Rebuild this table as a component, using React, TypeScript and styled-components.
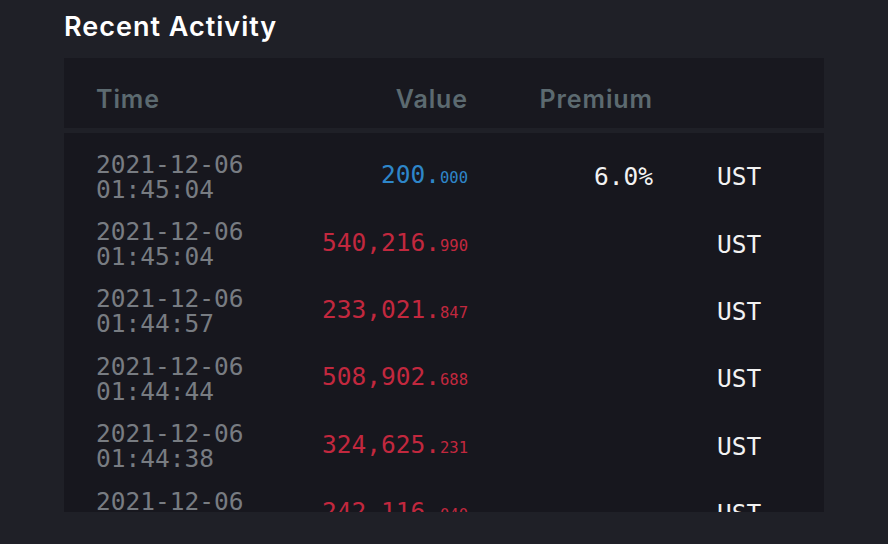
import React from 'react'
import styled, { createGlobalStyle } from 'styled-components'

const GlobalStyle = createGlobalStyle`
    html, body {
        margin: 0;
        padding: 0;
        background: #1f2027;
    }
    body {
        font-family: Inter, "Noto Sans", sans-serif;
    }
`

const Page = styled.div`
    width: 888px;
    height: 544px;
    padding: 0 64px;
    box-sizing: border-box;
    overflow: hidden;
`

const Title = styled.h2`
    margin: 0;
    padding-top: 13px;
    height: 58px;
    box-sizing: border-box;
    font-size: 27px;
    line-height: 27px;
    font-weight: 600;
    letter-spacing: 1px;
    color: #ffffff;
`

const Table = styled.div`
    display: flex;
    flex-direction: column;
    gap: 5px;
`

const cols = '212px 160px 185px 1fr'

const Head = styled.div`
    display: grid;
    grid-template-columns: ${cols};
    align-items: start;
    height: 70px;
    padding: 28px 32px 0;
    box-sizing: border-box;
    background: #18181f;
`

const HeadCell = styled.div<{ $align?: 'left' | 'right' }>`
    font-size: 25px;
    line-height: 26px;
    font-weight: 600;
    letter-spacing: 0.9px;
    color: #5c6a70;
    text-align: ${p => p.$align || 'left'};
`

const Body = styled.div`
    height: 379px;
    padding-top: 10px;
    box-sizing: border-box;
    overflow: hidden;
    background: #17171e;
`

const Row = styled.div`
    display: grid;
    grid-template-columns: ${cols};
    align-items: center;
    height: 67.4px;
    padding: 0 32px;
    font-family: "DejaVu Sans Mono", "Liberation Mono", monospace;
    font-size: 24.5px;
    line-height: 25px;
`

const Time = styled.div`
    color: #787c82;
    white-space: nowrap;
`

const Value = styled.div<{ $kind: 'buy' | 'sell' }>`
    text-align: right;
    white-space: nowrap;
    color: ${p => (p.$kind === 'buy' ? '#2e86c9' : '#c2283e')};
`

const Decimals = styled.span`
    font-size: 15.5px;
`

const Premium = styled.div`
    text-align: right;
    color: #f2f2f2;
`

const Currency = styled.div`
    padding-left: 64px;
    color: #f2f2f2;
`

const rows = [
    { date: '2021-12-06', time: '01:45:04', int: '200', dec: '000', kind: 'buy', premium: '6.0%' },
    { date: '2021-12-06', time: '01:45:04', int: '540,216', dec: '990', kind: 'sell' },
    { date: '2021-12-06', time: '01:44:57', int: '233,021', dec: '847', kind: 'sell' },
    { date: '2021-12-06', time: '01:44:44', int: '508,902', dec: '688', kind: 'sell' },
    { date: '2021-12-06', time: '01:44:38', int: '324,625', dec: '231', kind: 'sell' },
    { date: '2021-12-06', time: '01:44:31', int: '242,116', dec: '040', kind: 'sell' },
] as const

export default function App() {
    return (
        <Page>
            <GlobalStyle />
            <Title>Recent Activity</Title>
            <Table>
                <Head>
                    <HeadCell>Time</HeadCell>
                    <HeadCell $align="right">Value</HeadCell>
                    <HeadCell $align="right">Premium</HeadCell>
                    <HeadCell />
                </Head>
                <Body>
                    {rows.map((r, i) => (
                        <Row key={i}>
                            <Time>
                                {r.date}
                                <br />
                                {r.time}
                            </Time>
                            <Value $kind={r.kind}>
                                {r.int}.<Decimals>{r.dec}</Decimals>
                            </Value>
                            <Premium>{'premium' in r ? r.premium : ''}</Premium>
                            <Currency>UST</Currency>
                        </Row>
                    ))}
                </Body>
            </Table>
        </Page>
    )
}
